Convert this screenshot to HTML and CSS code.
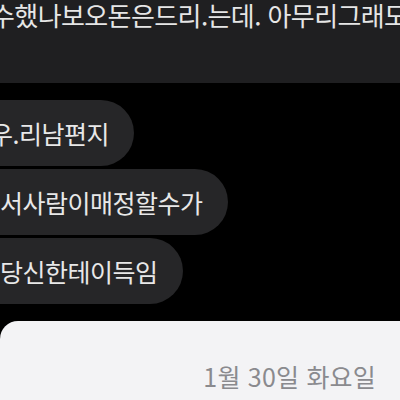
FILE: index.html
```html
<!DOCTYPE html>
<html lang="ko">
<head>
  <meta charset="UTF-8" />
  <meta name="viewport" content="width=device-width, initial-scale=1.0" />
  <title>대화</title>
  <link rel="stylesheet" href="styles.css">
</head>
<body>
  <div class="screen">
    <!-- 위쪽 메시지 -->
    <div class="top">
      <p class="top-text">수했나보오돈은드리.는데. 아무리그래도</p>
    </div>

    <!-- 받은 메시지 -->
    <div class="thread">
      <div class="bubble bubble-first">우.리남편지</div>
      <div class="bubble">서사람이매정할수가</div>
      <div class="bubble">당신한테이득임</div>
    </div>

    <!-- 날짜 패널 -->
    <div class="panel">
      <span class="date">1월 30일 화요일</span>
    </div>
  </div>
</body>
</html>
```

FILE: styles.css
```css
body {
  margin: 0;
  background-color: #000000;
  font-family: "Noto Sans CJK KR", "Noto Sans", sans-serif;
}
.screen {
  width: 400px;
  height: 400px;
  overflow: hidden;
  display: flex;
  flex-direction: column;
}
.top {
  height: 83px;
  background-color: #1f1f21;
  flex-shrink: 0;
  overflow: hidden;
}
.top-text {
  margin: 0 0 0 -9px;
  white-space: nowrap;
  color: #e6e6e6;
  font-size: 26px;
  line-height: 30px;
  letter-spacing: -0.6px;
}
.thread {
  display: flex;
  flex-direction: column;
  align-items: flex-start;
  gap: 3px;
  padding-top: 17px;
}
.bubble {
  height: 66px;
  display: flex;
  align-items: center;
  margin-left: -40px;
  padding: 0 25px 0 40px;
  border-radius: 33px;
  background-color: #262628;
  color: #e8e8e8;
  font-size: 25px;
  letter-spacing: -0.5px;
  white-space: nowrap;
}
.bubble-first {
  text-indent: -10px;
}
.panel {
  margin-top: 17px;
  flex: 1;
  display: flex;
  justify-content: flex-end;
  padding: 40px 24px 0 0;
  background-color: #f3f3f5;
  border-top-left-radius: 18px;
}
.date {
  color: #8a8a8e;
  font-size: 25px;
  line-height: 30px;
  letter-spacing: 0.2px;
}
```
